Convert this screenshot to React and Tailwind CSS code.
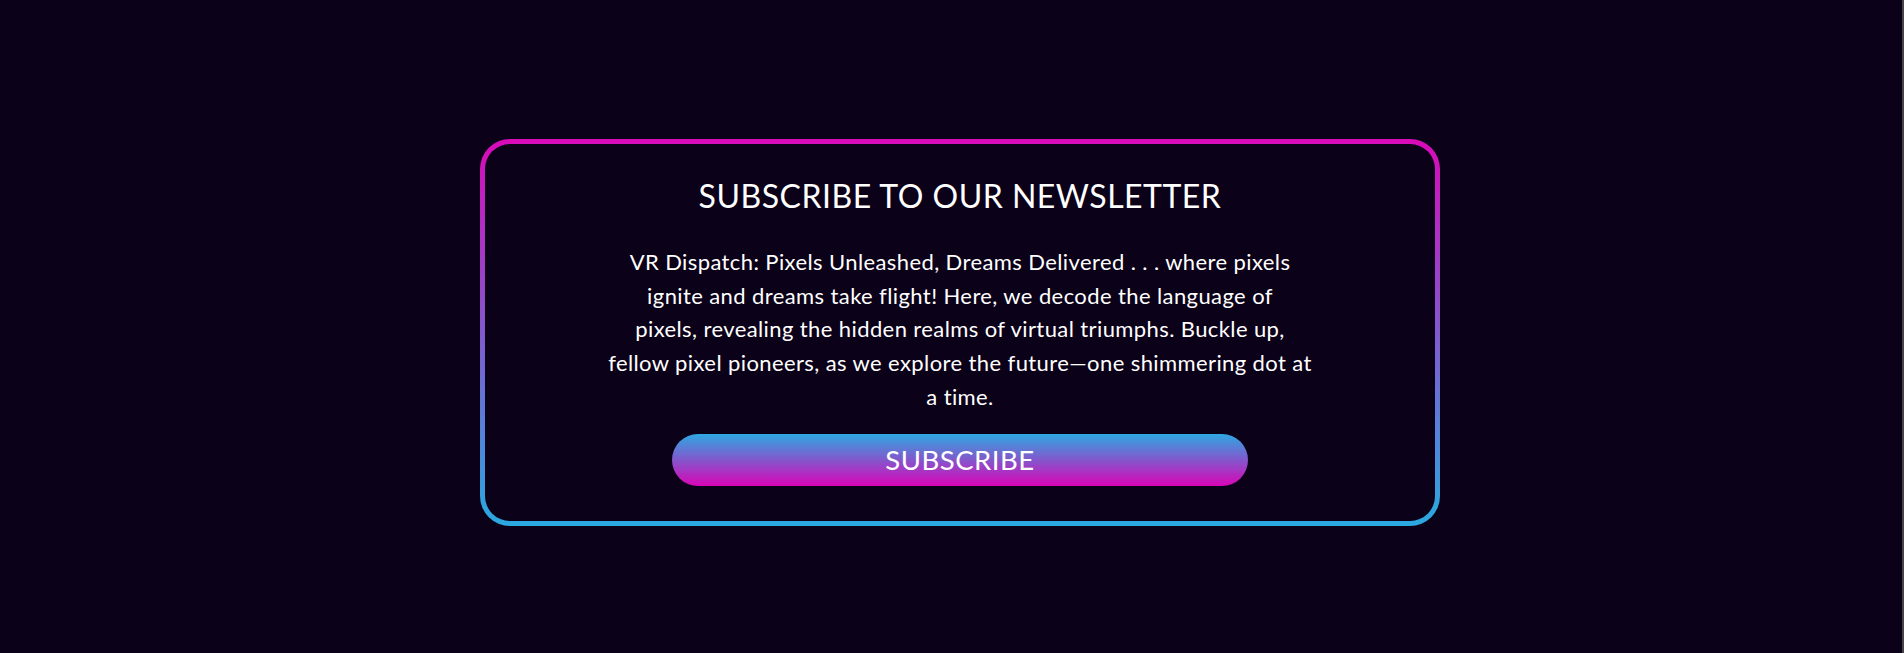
import React from 'react';

const lines = [
  'VR Dispatch: Pixels Unleashed, Dreams Delivered . . . where pixels',
  'ignite and dreams take flight! Here, we decode the language of',
  'pixels, revealing the hidden realms of virtual triumphs. Buckle up,',
  'fellow pixel pioneers, as we explore the future\u2014one shimmering dot at',
  'a time.',
];

const App = () => {
  return (
    <div
      className="h-[653px] w-full bg-[#0b0119] border-r-2 border-[#454545] pt-[139px] pl-[18px] flex justify-center items-start text-white"
      style={{ fontFamily: 'Lato, "Open Sans", sans-serif' }}
    >
      {/* Card with gradient border */}
      <div className="w-[960px] h-[387px] rounded-[30px] p-[5px] bg-linear-to-b/srgb from-[#d90ab9] to-[#2aa9e0]">
        <div className="h-full w-full rounded-[25px] bg-[#0b0119] flex flex-col items-center pt-[32px]">
          <h2 className="text-[32px] leading-[40px] tracking-[0.5px]">SUBSCRIBE TO OUR NEWSLETTER</h2>

          <p className="mt-[29px] w-[760px] text-center text-[22px] leading-[33.7px] tracking-[0.4px]">
            {lines.map((l, i) => (
              <span key={i} className="block">{l}</span>
            ))}
          </p>

          {/* Subscribe button */}
          <button className="mt-[20px] w-[576px] h-[52px] rounded-full bg-linear-to-b/srgb from-[#2ea8e2] to-[#d905b6] text-[27.5px] tracking-[0.5px] text-white">
            SUBSCRIBE
          </button>
        </div>
      </div>
    </div>
  );
};

export default App;
